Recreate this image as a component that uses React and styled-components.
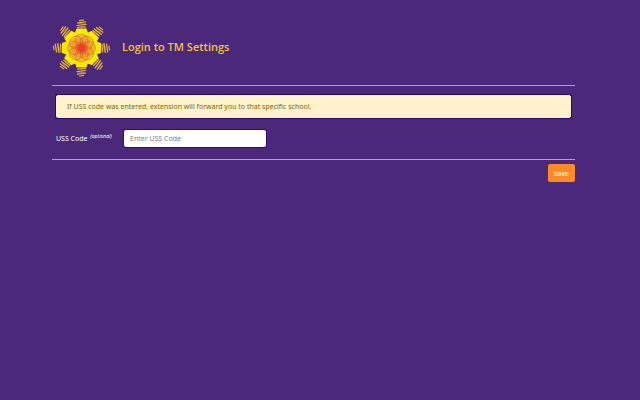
import styled, { createGlobalStyle } from 'styled-components';

const GlobalStyle = createGlobalStyle`
  * {
    box-sizing: border-box;
  }

  body {
    margin: 0;
    background: #4b2879;
    color: #fff;
    font-family: 'Noto Sans', 'Open Sans', sans-serif;
    font-size: 7px;
    line-height: 11px;
  }
`;

const Page = styled.main`
  padding: 18px 65px 0 52px;
`;

const Header = styled.header`
  display: flex;
  align-items: center;
  gap: 11px;
  height: 67px;
  padding-bottom: 8px;
`;

const Logo = styled.svg`
  width: 59px;
  height: 58px;
  flex-shrink: 0;
`;

const Title = styled.h1`
  margin: 0;
  padding-bottom: 2px;
  color: #f2c53d;
  font-family: 'Open Sans', 'Noto Sans', sans-serif;
  font-size: 11px;
  font-weight: 600;
  line-height: 16px;
`;

const Divider = styled.hr`
  height: 1px;
  margin: 0;
  border: none;
  background: #b59ad6;
`;

const Body = styled.div`
  padding: 9px 4px 12px;
`;

const Alert = styled.div`
  padding: 5px 10px;
  border: 1px solid #ffeeba;
  border-radius: 2px;
  background: #fff3cd;
  color: #856404;
  box-shadow: 0 0 0 1px #2b0a70;
`;

const Field = styled.div`
  display: flex;
  align-items: center;
  margin-top: 12px;
`;

const Label = styled.label`
  width: 68px;
  white-space: nowrap;
`;

const Optional = styled.sup`
  margin-left: 1px;
  font-size: 5px;
  font-style: italic;
  line-height: 0;
`;

const Input = styled.input`
  width: 142px;
  height: 17px;
  padding: 0 6px;
  border: none;
  border-radius: 2px;
  background: #fff;
  color: #495057;
  font: inherit;
  box-shadow: 0 0 0 1px #2f0c72;

  &::placeholder {
    color: #7b838b;
    opacity: 1;
  }
`;

const Footer = styled.footer`
  display: flex;
  justify-content: flex-end;
  padding-top: 4px;
`;

const Button = styled.button`
  height: 18px;
  padding: 0 6px;
  border: none;
  border-radius: 2px;
  background: #fd8a25;
  color: #fff;
  font: inherit;
  cursor: pointer;
`;

const ANGLES = [0, 45, 90, 135, 180, 225, 270, 315];

const SunLogo = () => (
  <Logo viewBox="-29.5 -29 59 58" role="img" aria-label="TM">
    {ANGLES.map((angle) => (
      <g key={angle} transform={`rotate(${angle})`}>
        <path d="M-7 -11 L-6.5 -15 L-5 -19.5 L5 -19.5 L6.5 -15 L7 -11 Z" fill="#fde900" />
        <path
          d="M-4 -20.5 L4 -21 M-4.5 -22.5 L4.5 -23.7 M-4 -25 L4 -26.2 M-2 -27.4 L2 -28"
          fill="none"
          stroke="#e9b43d"
          strokeWidth="1.2"
          strokeLinecap="round"
        />
        <path d="M4 -21 L-4.5 -22.5 M4.5 -23.7 L-4 -25" stroke="#e9b43d" strokeWidth="0.5" />
      </g>
    ))}
    <circle r="15" fill="#fde900" />
    <circle r="13.5" fill="#f9b62a" />
    <circle r="10.5" fill="#f79a2b" />
    <circle r="6.5" fill="#f4702c" />
    <g fill="none" stroke="#8f5a2e" strokeWidth="0.4">
      {ANGLES.map((angle) => (
        <circle key={angle} cy="-7.5" r="6.5" transform={`rotate(${angle})`} />
      ))}
    </g>
    <circle r="4.2" fill="#f43d26" />
  </Logo>
);

const App = () => {
  return (
    <>
      <GlobalStyle />
      <Page>
        <Header>
          <SunLogo />
          <Title>Login to TM Settings</Title>
        </Header>
        <Divider />
        <Body>
          <Alert role="alert">
            If USS code was entered, extension will forward you to that specific school.
          </Alert>
          <Field>
            <Label htmlFor="uss-code">
              USS Code <Optional>(optional)</Optional>
            </Label>
            <Input id="uss-code" type="text" placeholder="Enter USS Code" />
          </Field>
        </Body>
        <Divider />
        <Footer>
          <Button type="button">Save</Button>
        </Footer>
      </Page>
    </>
  );
};

export default App;
